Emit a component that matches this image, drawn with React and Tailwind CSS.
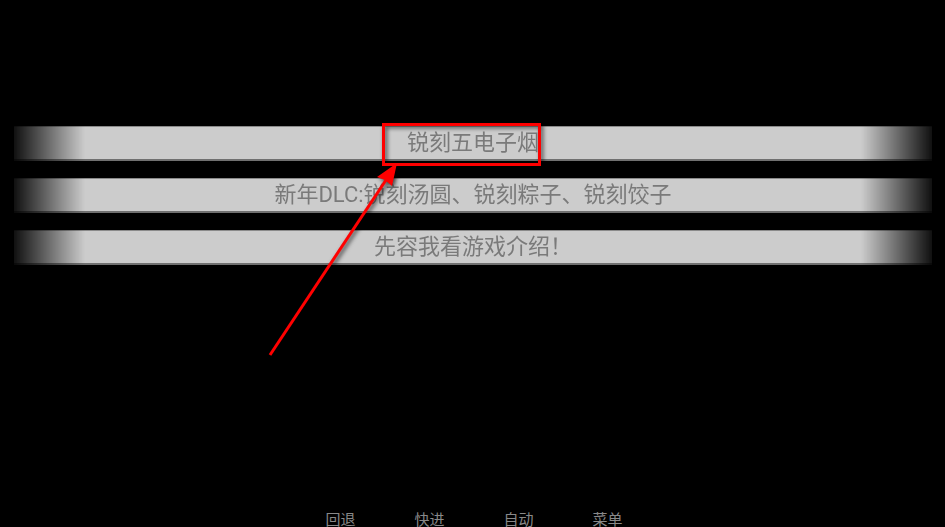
import React from 'react';

const options = [
  '锐刻五电子烟',
  '新年DLC:锐刻汤圆、锐刻粽子、锐刻饺子',
  <>
    先容我看游戏介绍
    <span className="inline-block w-[22px] text-center">！</span>
  </>,
];
const menu = ['回退', '快进', '自动', '菜单'];

export default function App() {
  return (
    <div
      className="relative h-[527px] w-[945px] overflow-hidden bg-black"
      style={{ fontFamily: 'Roboto, "Noto Sans CJK SC", sans-serif' }}
    >
      {/* Choice bars */}
      <div className="flex flex-col gap-[17px] pt-[126px] pl-[14px] pr-[13px]">
        {options.map((text, i) => (
          <div
            key={i}
            className="flex h-[35px] items-center justify-center border-t border-b-2 border-t-[#8a8a8a] border-b-[#707070] bg-[#cccccc] [mask-image:linear-gradient(to_right,rgba(0,0,0,0.08)_0px,black_71px,black_calc(100%-71px),rgba(0,0,0,0.08)_100%)]"
          >
            <span className="text-[22px] leading-none text-[#7a7a7a]">{text}</span>
          </div>
        ))}
      </div>

      {/* Quick menu */}
      <div className="mt-[248px] flex justify-center gap-[59px] pl-[3px]">
        {menu.map((m) => (
          <span key={m} className="text-[15px] leading-[15px] text-[#888888]">
            {m}
          </span>
        ))}
      </div>

      {/* Annotation overlay */}
      <svg
        className="pointer-events-none absolute inset-0"
        width="945"
        height="527"
        style={{ filter: 'drop-shadow(2px 2px 2px rgba(0,0,0,0.7))' }}
      >
        <rect x="383.5" y="124.5" width="156" height="40" fill="none" stroke="#ff0000" strokeWidth="3" />
        <line x1="270" y1="355" x2="386" y2="180" stroke="#ff0000" strokeWidth="3" />
        <polygon points="397,163 392,186 385,180 377,177" fill="#ff0000" />
      </svg>
    </div>
  );
}
